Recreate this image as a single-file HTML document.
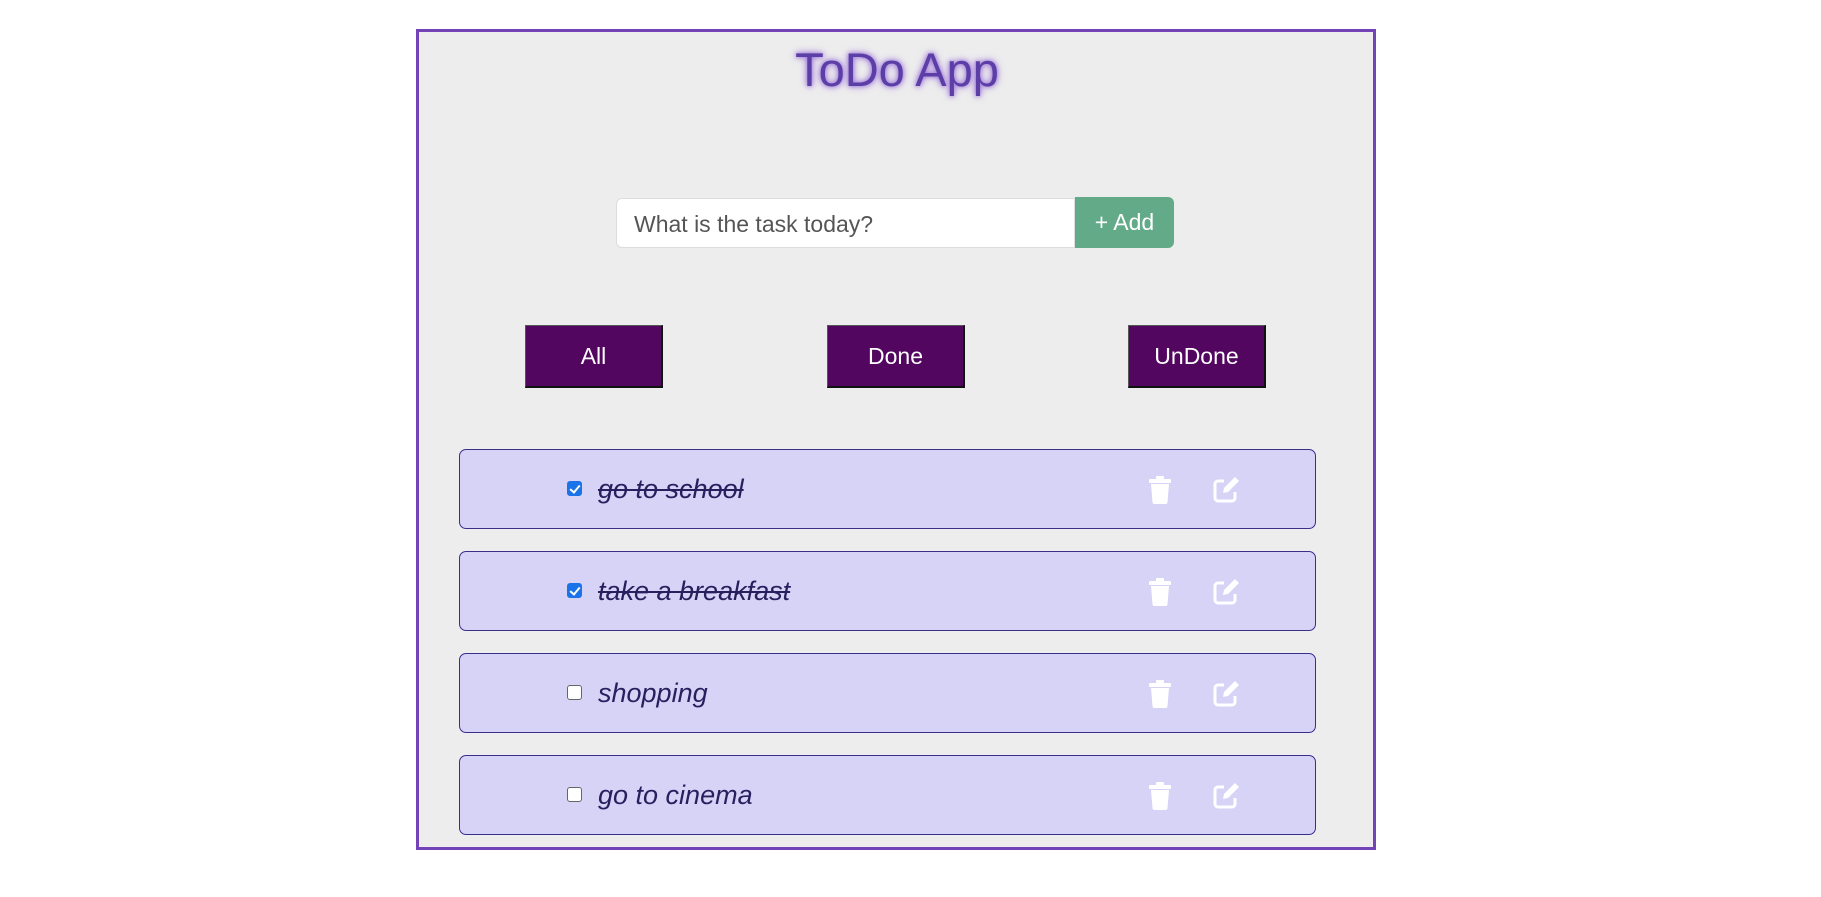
<!DOCTYPE html>
<html><head><style>
body{margin:0;width:1821px;height:897px;background:#fff;font-family:"Liberation Sans",sans-serif;position:relative;overflow:hidden}
.box{position:absolute;left:416px;top:29px;width:954px;height:815px;border:3px solid #7443b8;background:#ededed}
h1{position:absolute;left:418px;width:958px;top:42px;margin:0;text-align:center;font-weight:normal;font-size:47px;color:#5b3ea6;text-shadow:0 0 8px #9a6fd8,0 0 4px #a07ad8}
.abs{position:absolute}
.inp{left:616px;top:198px;width:459px;height:50px;background:#fff;border:1px solid #ddd;border-radius:6px 0 0 6px;box-sizing:border-box;font-size:23px;color:#555;padding:12px 0 0 17px}
.add{left:1075px;top:197px;width:99px;height:51px;background:#63aa89;border-radius:0 6px 6px 0;color:#fff;font-size:23px;text-align:center;line-height:50px}
.btn{top:325px;width:138px;height:63px;background:#52065f;border:1px solid #222;border-top-color:#555;border-left-color:#555;border-bottom:2px solid #111;border-right:2px solid #111;box-sizing:border-box;color:#fff;font-size:23px;text-align:center;line-height:60px}
.item{left:459px;width:857px;height:80px;background:#d6d3f7;border:1px solid #3a2e8a;border-radius:7px;box-sizing:border-box}
.cb{position:absolute;left:107px;top:31px;width:15px;height:15px;border-radius:3px;box-sizing:border-box;border:1.5px solid #666;background:#fff}
.cb.on{background:#1a73e8;border-color:#1a73e8}
.cb.on::after{content:"";position:absolute;left:4px;top:1px;width:4px;height:8px;border:solid #fff;border-width:0 2px 2px 0;transform:rotate(40deg)}
.t{position:absolute;left:138px;top:24px;font-size:27px;font-style:italic;color:#2a1f5e}
.t.s{text-decoration:line-through}
.ic{position:absolute;top:26px}
</style></head><body>
<div class="box"></div>
<h1>ToDo App</h1>
<div class="abs inp">What is the task today?</div>
<div class="abs add">+ Add</div>
<div class="abs btn" style="left:525px">All</div>
<div class="abs btn" style="left:827px">Done</div>
<div class="abs btn" style="left:1128px">UnDone</div>

<div class="abs item" style="top:449px"><div class="cb on"></div><div class="t s">go to school</div>
<svg class="ic" style="left:688px" width="24" height="28" viewBox="0 0 24 28"><rect x="1" y="3" width="22" height="4" rx="1" fill="#fff"/><rect x="8" y="0" width="8" height="4" rx="1" fill="#fff"/><path d="M3 8h18l-1.5 18a2 2 0 0 1-2 2h-11a2 2 0 0 1-2-2z" fill="#fff"/></svg>
<svg class="ic" style="left:752px" width="28" height="28" viewBox="0 0 28 28"><path d="M12 5H6a3 3 0 0 0-3 3v14a3 3 0 0 0 3 3h14a3 3 0 0 0 3-3v-6" fill="none" stroke="#fff" stroke-width="3"/><path d="M11 17l1-5 11-11 4 4-11 11z" fill="#fff"/></svg></div>

<div class="abs item" style="top:551px"><div class="cb on"></div><div class="t s">take a breakfast</div>
<svg class="ic" style="left:688px" width="24" height="28" viewBox="0 0 24 28"><rect x="1" y="3" width="22" height="4" rx="1" fill="#fff"/><rect x="8" y="0" width="8" height="4" rx="1" fill="#fff"/><path d="M3 8h18l-1.5 18a2 2 0 0 1-2 2h-11a2 2 0 0 1-2-2z" fill="#fff"/></svg>
<svg class="ic" style="left:752px" width="28" height="28" viewBox="0 0 28 28"><path d="M12 5H6a3 3 0 0 0-3 3v14a3 3 0 0 0 3 3h14a3 3 0 0 0 3-3v-6" fill="none" stroke="#fff" stroke-width="3"/><path d="M11 17l1-5 11-11 4 4-11 11z" fill="#fff"/></svg></div>

<div class="abs item" style="top:653px"><div class="cb"></div><div class="t">shopping</div>
<svg class="ic" style="left:688px" width="24" height="28" viewBox="0 0 24 28"><rect x="1" y="3" width="22" height="4" rx="1" fill="#fff"/><rect x="8" y="0" width="8" height="4" rx="1" fill="#fff"/><path d="M3 8h18l-1.5 18a2 2 0 0 1-2 2h-11a2 2 0 0 1-2-2z" fill="#fff"/></svg>
<svg class="ic" style="left:752px" width="28" height="28" viewBox="0 0 28 28"><path d="M12 5H6a3 3 0 0 0-3 3v14a3 3 0 0 0 3 3h14a3 3 0 0 0 3-3v-6" fill="none" stroke="#fff" stroke-width="3"/><path d="M11 17l1-5 11-11 4 4-11 11z" fill="#fff"/></svg></div>

<div class="abs item" style="top:755px"><div class="cb"></div><div class="t">go to cinema</div>
<svg class="ic" style="left:688px" width="24" height="28" viewBox="0 0 24 28"><rect x="1" y="3" width="22" height="4" rx="1" fill="#fff"/><rect x="8" y="0" width="8" height="4" rx="1" fill="#fff"/><path d="M3 8h18l-1.5 18a2 2 0 0 1-2 2h-11a2 2 0 0 1-2-2z" fill="#fff"/></svg>
<svg class="ic" style="left:752px" width="28" height="28" viewBox="0 0 28 28"><path d="M12 5H6a3 3 0 0 0-3 3v14a3 3 0 0 0 3 3h14a3 3 0 0 0 3-3v-6" fill="none" stroke="#fff" stroke-width="3"/><path d="M11 17l1-5 11-11 4 4-11 11z" fill="#fff"/></svg></div>
</body></html>
